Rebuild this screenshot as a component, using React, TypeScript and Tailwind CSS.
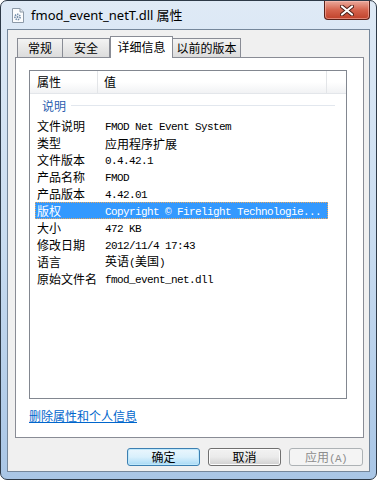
import React from "react";

const rows: [string, string][] = [
  ["文件说明", "FMOD Net Event System"],
  ["类型", "应用程序扩展"],
  ["文件版本", "0.4.42.1"],
  ["产品名称", "FMOD"],
  ["产品版本", "4.42.01"],
  ["版权", "Copyright © Firelight Technologie..."],
  ["大小", "472 KB"],
  ["修改日期", "2012/11/4 17:43"],
  ["语言", "英语(美国)"],
  ["原始文件名", "fmod_event_net.dll"],
];

function Value({ text }: { text: string }) {
  const parts = text.split(/([\u4e00-\u9fff]+)/).filter((p) => p.length > 0);
  return (
    <span className="whitespace-pre">
      {parts.map((p, i) =>
        /[\u4e00-\u9fff]/.test(p) ? (
          <span key={i} className="text-[12px] [font-family:'Noto_Sans_CJK_SC',sans-serif]">
            {p}
          </span>
        ) : (
          <span key={i} className="text-[11px] tracking-[-0.6px] [font-family:'Liberation_Mono',monospace]">
            {p}
          </span>
        )
      )}
    </span>
  );
}

function FileIcon() {
  return (
    <svg width="12" height="15" viewBox="0 0 12 15">
      <path d="M0.5 0.5 H8 L11.5 4 V14.5 H0.5 Z" fill="#fbfcfd" stroke="#8d9aa8" />
      <path d="M8 0.5 V4 H11.5" fill="#e4e9ee" stroke="#8d9aa8" />
      <circle cx="5.5" cy="9" r="2.6" fill="none" stroke="#6f8aa8" strokeWidth="1.6" strokeDasharray="1.4 0.9" />
      <circle cx="5.5" cy="9" r="1" fill="#6f8aa8" />
    </svg>
  );
}

function CloseX() {
  return (
    <svg width="14" height="11" viewBox="0 0 14 11">
      <path d="M2 1.5 L12 9.5 M12 1.5 L2 9.5" stroke="#4a1d16" strokeWidth="4" strokeLinecap="round" />
      <path d="M2 1.5 L12 9.5 M12 1.5 L2 9.5" stroke="#ffffff" strokeWidth="2.2" strokeLinecap="round" />
    </svg>
  );
}

export default function App() {
  const cjk = "[font-family:'Noto_Sans_CJK_SC',sans-serif]";
  return (
    <div className="w-[377px] h-[480px] overflow-hidden bg-white">
      <div className="w-[377px] h-[480px] flex flex-col rounded-[7px] border border-[#2e3a48] bg-gradient-to-b from-[#dfeaf6] via-[#c9dcf0] to-[#a9c6e6] [font-family:'Noto_Sans',sans-serif]">
        {/* Title bar */}
        <div className="h-[28px] flex items-start relative">
          <div className="ml-[11px] mt-[7px]">
            <FileIcon />
          </div>
          <div className={`ml-[7px] mt-[5px] text-[13px] leading-[18px] text-black ${cjk}`}>
            <span className="[font-family:'Noto_Sans',sans-serif]">fmod_event_netT.dll</span> 属性
          </div>
          <div className="absolute right-[6px] top-0 w-[46px] h-[19px] rounded-b-[4px] border border-t-0 border-[#5a2119] bg-gradient-to-b from-[#e9a99c] via-[#d5634d] to-[#c0412a] flex items-center justify-center shadow-[inset_0_0_0_1px_rgba(255,200,190,0.5)]">
            <CloseX />
          </div>
        </div>

        {/* Client area */}
        <div className={`mx-[6px] flex-1 mb-[7px] border border-[#75879b] bg-[#f0f0f0] flex flex-col ${cjk}`}>
          {/* Tabs */}
          <div className="h-[27px] flex items-end pl-[9px] pt-[6px]">
            <div className="w-[46px] h-[19px] border border-b-0 border-[#898c95] bg-gradient-to-b from-[#f3f3f3] to-[#dcdcdc] text-[12px] leading-[18px] text-center">
              常规
            </div>
            <div className="w-[47px] h-[19px] border border-b-0 border-l-0 border-[#898c95] bg-gradient-to-b from-[#f3f3f3] to-[#dcdcdc] text-[12px] leading-[18px] text-center">
              安全
            </div>
            <div className="w-[63px] h-[22px] -mb-px relative z-10 border border-b-0 border-[#898c95] bg-white text-[12px] leading-[20px] text-center">
              详细信息
            </div>
            <div className="w-[68px] h-[19px] border border-b-0 border-l-0 border-[#898c95] bg-gradient-to-b from-[#f3f3f3] to-[#dcdcdc] text-[12px] leading-[18px] text-center">
              以前的版本
            </div>
          </div>

          {/* Tab panel */}
          <div className="ml-[7px] w-[349px] h-[381px] border border-[#898c95] bg-white flex flex-col">
            {/* List */}
            <div className="ml-[13px] mt-[12px] w-[318px] h-[329px] border border-[#828790] bg-white flex flex-col">
              {/* Header */}
              <div className="h-[23px] flex bg-gradient-to-b from-white via-white to-[#f1f2f4] border-b border-[#e3e6ea] text-[12px] leading-[22px]">
                <div className="w-[68px] pl-[7px] border-r border-[#e3e5e8]">属性</div>
                <div className="w-[229px] pl-[6px] border-r border-[#e3e5e8]">值</div>
                <div className="flex-1" />
              </div>
              {/* Group */}
              <div className="h-[23px] flex items-center pl-[12px] pr-[11px]">
                <span className="text-[12px] text-[#2a5db0]">说明</span>
                <div className="ml-[5px] flex-1 h-px bg-[#e2e7ee]" />
              </div>
              {/* Rows */}
              <div className="flex flex-col pl-[5px]">
                {rows.map(([k, v], i) => {
                  const sel = i === 5;
                  return (
                    <div
                      key={k}
                      className={
                        sel
                          ? "w-[293px] h-[17px] flex items-center bg-[#3399ff] text-white outline outline-1 outline-dotted outline-[#e8a860] -outline-offset-1"
                          : "w-[293px] h-[17px] flex items-center text-black"
                      }
                    >
                      <div className="w-[70px] pl-[2px] text-[12px] leading-[17px] whitespace-nowrap">{k}</div>
                      <div className="leading-[17px]">
                        <Value text={v} />
                      </div>
                    </div>
                  );
                })}
              </div>
            </div>
            {/* Link */}
            <div className="ml-[13px] mt-[9px] text-[12px] leading-[16px]">
              <span className="text-[#0066cc] underline">删除属性和个人信息</span>
            </div>
          </div>

          {/* Buttons */}
          <div className="mt-[10px] flex justify-end pr-[6px] gap-[8px]">
            <div className="w-[73px] h-[18px] rounded-[3px] border border-[#3c7fb1] bg-gradient-to-b from-[#eaf6fd] via-[#d9f0fc] to-[#a7d9f5] shadow-[inset_0_0_0_1px_#bfe8fb] text-[12px] leading-[16px] text-center">
              确定
            </div>
            <div className="w-[73px] h-[18px] rounded-[3px] border border-[#707070] bg-gradient-to-b from-[#f2f2f2] via-[#ebebeb] to-[#cfcfcf] shadow-[inset_0_0_0_1px_#fcfcfc] text-[12px] leading-[16px] text-center">
              取消
            </div>
            <div className="w-[74px] h-[18px] rounded-[3px] border border-[#adb2b5] bg-[#f4f4f4] text-[12px] leading-[16px] text-center text-[#8d8d8d]">
              应用<span className="text-[11px] tracking-[-0.6px] [font-family:'Liberation_Mono',monospace]">(A)</span>
            </div>
          </div>
        </div>
      </div>
    </div>
  );
}
